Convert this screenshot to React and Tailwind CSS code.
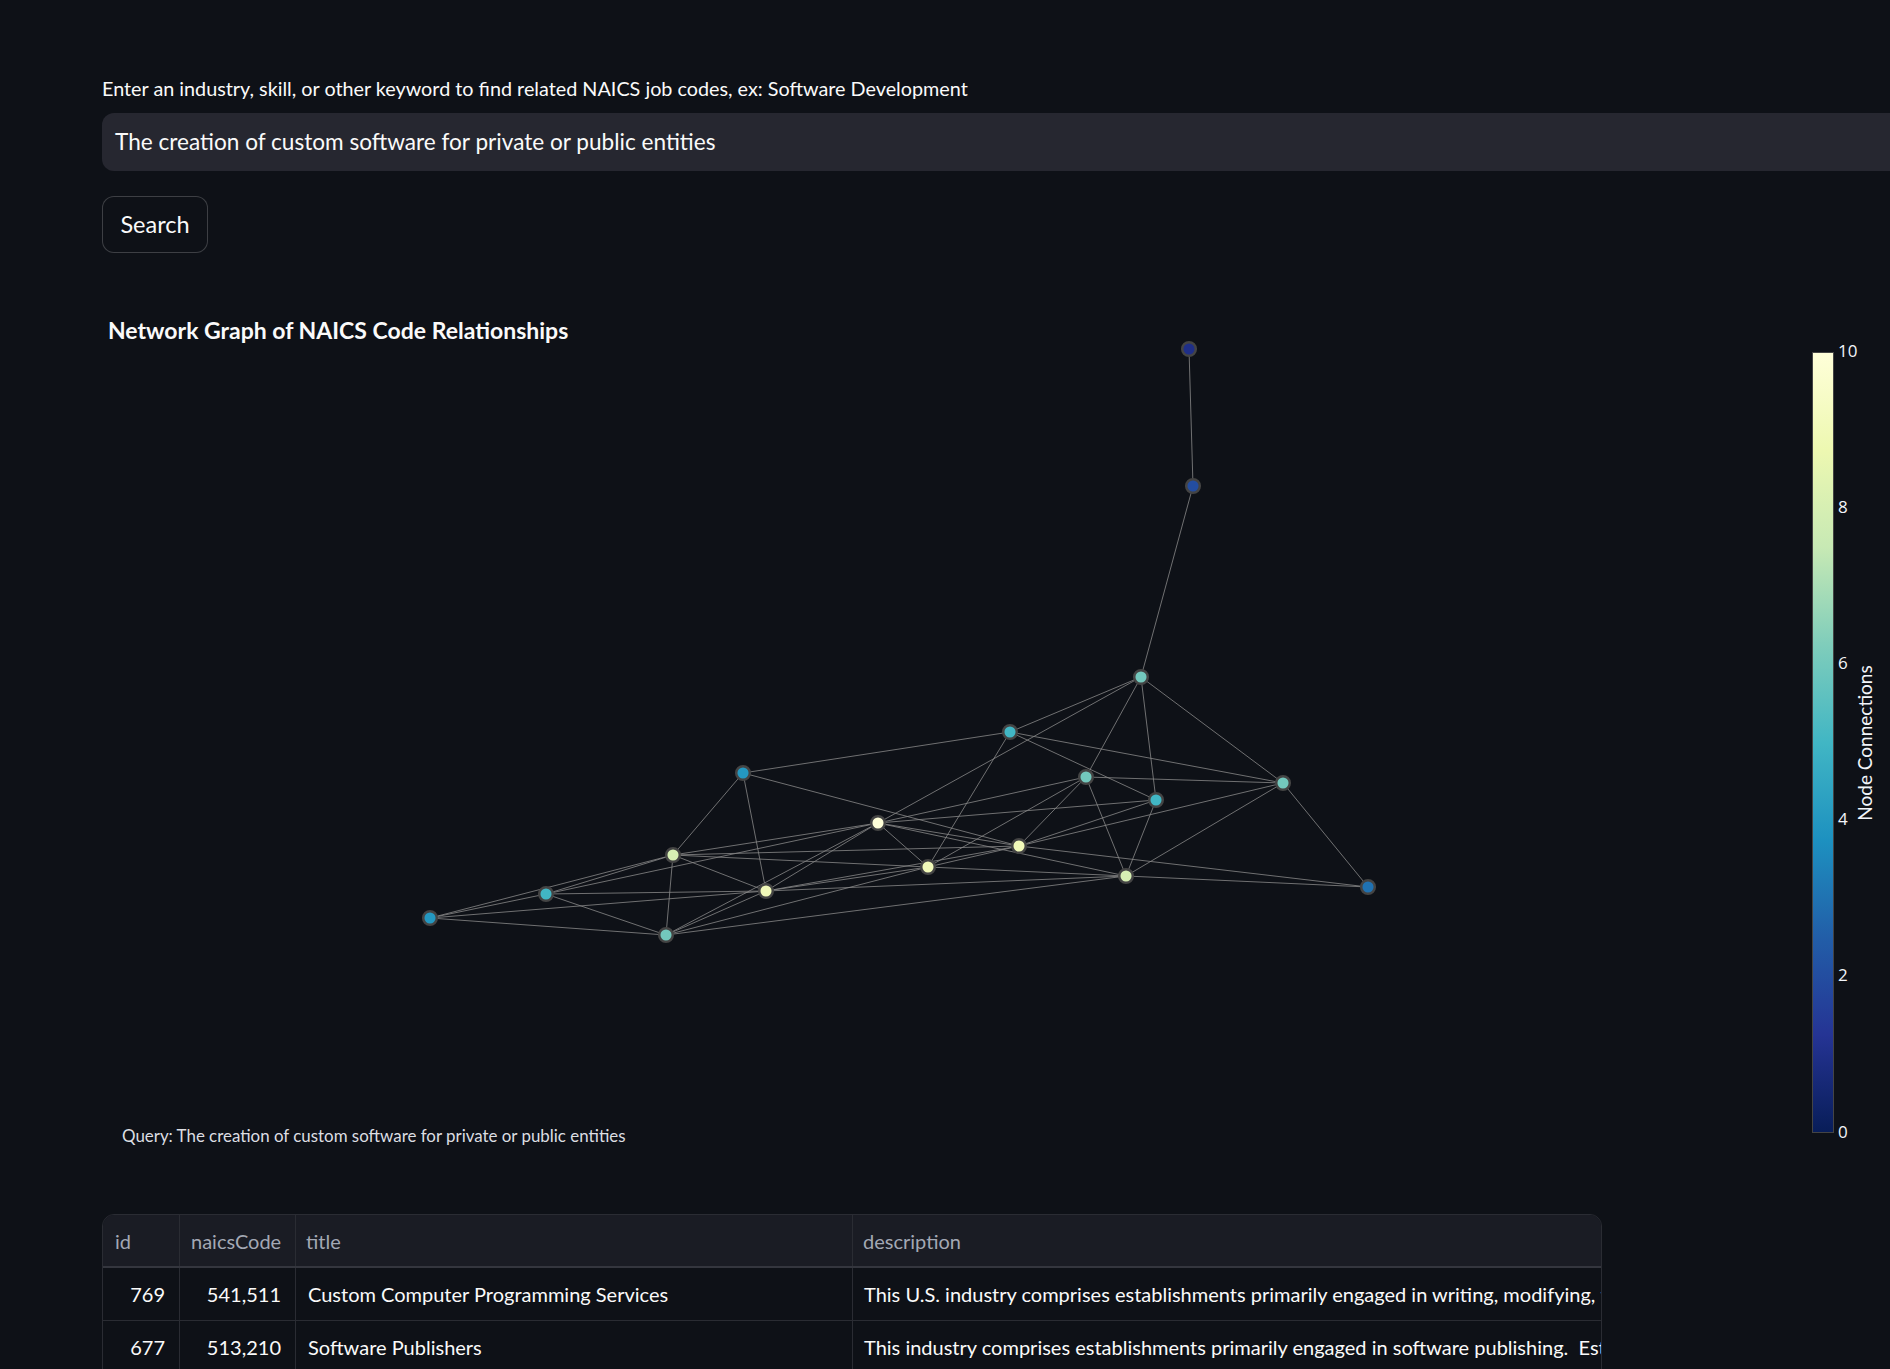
import React from "react";

const nodes = [
  { id: 1, x: 1189, y: 349, c: "#1f2f88" },
  { id: 2, x: 1193, y: 486, c: "#234da0" },
  { id: 3, x: 1141, y: 677, c: "#73c8bd" },
  { id: 4, x: 1010, y: 732, c: "#41b6c4" },
  { id: 5, x: 743, y: 773, c: "#2498c1" },
  { id: 6, x: 1086, y: 777, c: "#73c8bd" },
  { id: 7, x: 1156, y: 800, c: "#41b6c4" },
  { id: 8, x: 1283, y: 783, c: "#73c8bd" },
  { id: 9, x: 878, y: 823, c: "#ffffd9" },
  { id: 10, x: 673, y: 855, c: "#d6efb3" },
  { id: 11, x: 1019, y: 846, c: "#f1f9b9" },
  { id: 12, x: 928, y: 867, c: "#f1f9b9" },
  { id: 13, x: 766, y: 891, c: "#f1f9b9" },
  { id: 14, x: 1126, y: 876, c: "#d6efb3" },
  { id: 15, x: 546, y: 894, c: "#41b6c4" },
  { id: 16, x: 430, y: 918, c: "#2498c1" },
  { id: 17, x: 666, y: 935, c: "#73c8bd" },
  { id: 18, x: 1368, y: 887, c: "#2072b2" },
];

const edges = [
  [1, 2], [2, 3], [3, 4], [3, 9], [3, 6], [3, 7], [3, 8],
  [4, 5], [4, 8], [4, 7], [4, 12],
  [5, 10], [5, 13], [5, 11],
  [6, 8], [6, 9], [6, 12], [6, 11], [6, 14],
  [7, 9], [7, 11], [7, 14],
  [8, 11], [8, 14], [8, 18],
  [9, 10], [9, 11], [9, 12], [9, 13], [9, 15], [9, 17], [9, 14],
  [10, 16], [10, 15], [10, 17], [10, 13], [10, 11], [10, 12],
  [11, 12], [11, 13], [11, 18],
  [12, 13], [12, 14], [12, 17],
  [13, 15], [13, 16], [13, 17], [13, 14],
  [14, 18], [14, 17],
  [15, 16], [15, 17], [16, 17],
];

const byId = Object.fromEntries(nodes.map((n) => [n.id, n]));

const ticks = [0, 2, 4, 6, 8, 10];

const rows = [
  {
    id: 769,
    code: "541,511",
    title: "Custom Computer Programming Services",
    desc: "This U.S. industry comprises establishments primarily engaged in writing, modifying, testing, and supporting software to meet the needs of a particular customer.",
  },
  {
    id: 677,
    code: "513,210",
    title: "Software Publishers",
    desc: "This industry comprises establishments primarily engaged in software publishing.  Establishments in this industry carry out operations necessary for producing and distributing computer software.",
  },
  {
    id: 770,
    code: "541,512",
    title: "Computer Systems Design Services",
    desc: "This U.S. industry comprises establishments primarily engaged in planning and designing computer systems.",
  },
];

function Graph() {
  return (
    <svg
      width="1788"
      height="880"
      viewBox="102 300 1788 880"
      className="block"
      style={{ fontFamily: "Lato, 'Noto Sans', sans-serif" }}
    >
      <defs>
        <linearGradient id="ylgnbu" x1="0" y1="1" x2="0" y2="0">
          <stop offset="0" stopColor="rgb(8,29,88)" />
          <stop offset="0.125" stopColor="rgb(37,52,148)" />
          <stop offset="0.25" stopColor="rgb(34,94,168)" />
          <stop offset="0.375" stopColor="rgb(29,145,192)" />
          <stop offset="0.5" stopColor="rgb(65,182,196)" />
          <stop offset="0.625" stopColor="rgb(127,205,187)" />
          <stop offset="0.75" stopColor="rgb(199,233,180)" />
          <stop offset="0.875" stopColor="rgb(237,248,177)" />
          <stop offset="1" stopColor="rgb(255,255,217)" />
        </linearGradient>
      </defs>
      <text x="108" y="339" fill="#fafafa" fontSize="23" fontWeight="700">
        Network Graph of NAICS Code Relationships
      </text>
      <g stroke="#888" strokeWidth="1" strokeOpacity="0.8">
        {edges.map(([a, b], i) => (
          <line key={i} x1={byId[a].x} y1={byId[a].y} x2={byId[b].x} y2={byId[b].y} />
        ))}
      </g>
      <g stroke="#444" strokeWidth="2.5">
        {nodes.map((n) => (
          <circle key={n.id} cx={n.x} cy={n.y} r="6.8" fill={n.c} />
        ))}
      </g>
      <rect x="1812.5" y="352.5" width="21" height="780" fill="url(#ylgnbu)" stroke="#444" strokeWidth="1" />
      <g fill="#f2f5fa" fontSize="17" style={{ fontFamily: "'Open Sans', sans-serif" }}>
        {ticks.map((v) => (
          <text key={v} x="1838" y={1133 - v * 78.1} dominantBaseline="middle">
            {v}
          </text>
        ))}
      </g>
      <text
        x="1867"
        y="743"
        fill="#f2f5fa"
        fontSize="19"
        textAnchor="middle"
        dominantBaseline="middle"
        transform="rotate(-90 1867 743)"
      >
        Node Connections
      </text>
      <text x="122" y="1142" fill="#dcdee2" fontSize="16.9">
        Query: The creation of custom software for private or public entities
      </text>
    </svg>
  );
}

function Table() {
  const cols = "grid grid-cols-[76px_116px_557px_750px]";
  return (
    <div className="w-[1500px] rounded-t-[12px] border border-[#2a2c33] overflow-hidden">
      <div className={`${cols} h-[53px] bg-[#1a1c24] border-b-2 border-[#34363e] text-[#a3a8b4] text-[20px]`}>
        <div className="flex items-center px-[12px]">id</div>
        <div className="flex items-center px-[11px] border-l border-[#2a2c33]">naicsCode</div>
        <div className="flex items-center px-[10px] border-l border-[#2a2c33]">title</div>
        <div className="flex items-center px-[10px] border-l border-[#2a2c33]">description</div>
      </div>
      {rows.map((r) => (
        <div key={r.id} className={`${cols} h-[53px] border-b border-[#2a2c33] text-[#fafafa] text-[20px]`}>
          <div className="flex items-center justify-end pr-[14px]">{r.id}</div>
          <div className="flex items-center justify-end pr-[14px] border-l border-[#2a2c33]">{r.code}</div>
          <div className="flex items-center px-[12px] border-l border-[#2a2c33] whitespace-nowrap overflow-hidden">{r.title}</div>
          <div className="flex items-center pl-[11px] border-l border-[#2a2c33] whitespace-pre overflow-hidden">{r.desc}</div>
        </div>
      ))}
    </div>
  );
}

export default function App() {
  return (
    <div
      className="w-[1890px] h-[1369px] overflow-hidden bg-[#0e1117] text-[#fafafa]"
      style={{ fontFamily: "Lato, 'Noto Sans', sans-serif" }}
    >
      <div className="pl-[102px] pt-[73px] flex flex-col items-start">
        <div className="text-[19.8px] leading-[30px] mb-[10px]">
          Enter an industry, skill, or other keyword to find related NAICS job codes, ex: Software Development
        </div>
        <div className="w-[1800px] h-[58px] rounded-l-[12px] bg-[#262730] flex items-center pl-[13px] text-[22.6px]">
          The creation of custom software for private or public entities
        </div>
        <button className="mt-[25px] w-[106px] h-[57px] rounded-[12px] border border-[rgba(250,250,250,0.2)] bg-[#0e1117] text-[23.5px] text-[#fafafa] flex items-center justify-center">
          Search
        </button>
        <div className="mt-[47px] -ml-[102px] pl-[102px]">
          <Graph />
        </div>
        <div className="mt-[34px]">
          <Table />
        </div>
      </div>
    </div>
  );
}
